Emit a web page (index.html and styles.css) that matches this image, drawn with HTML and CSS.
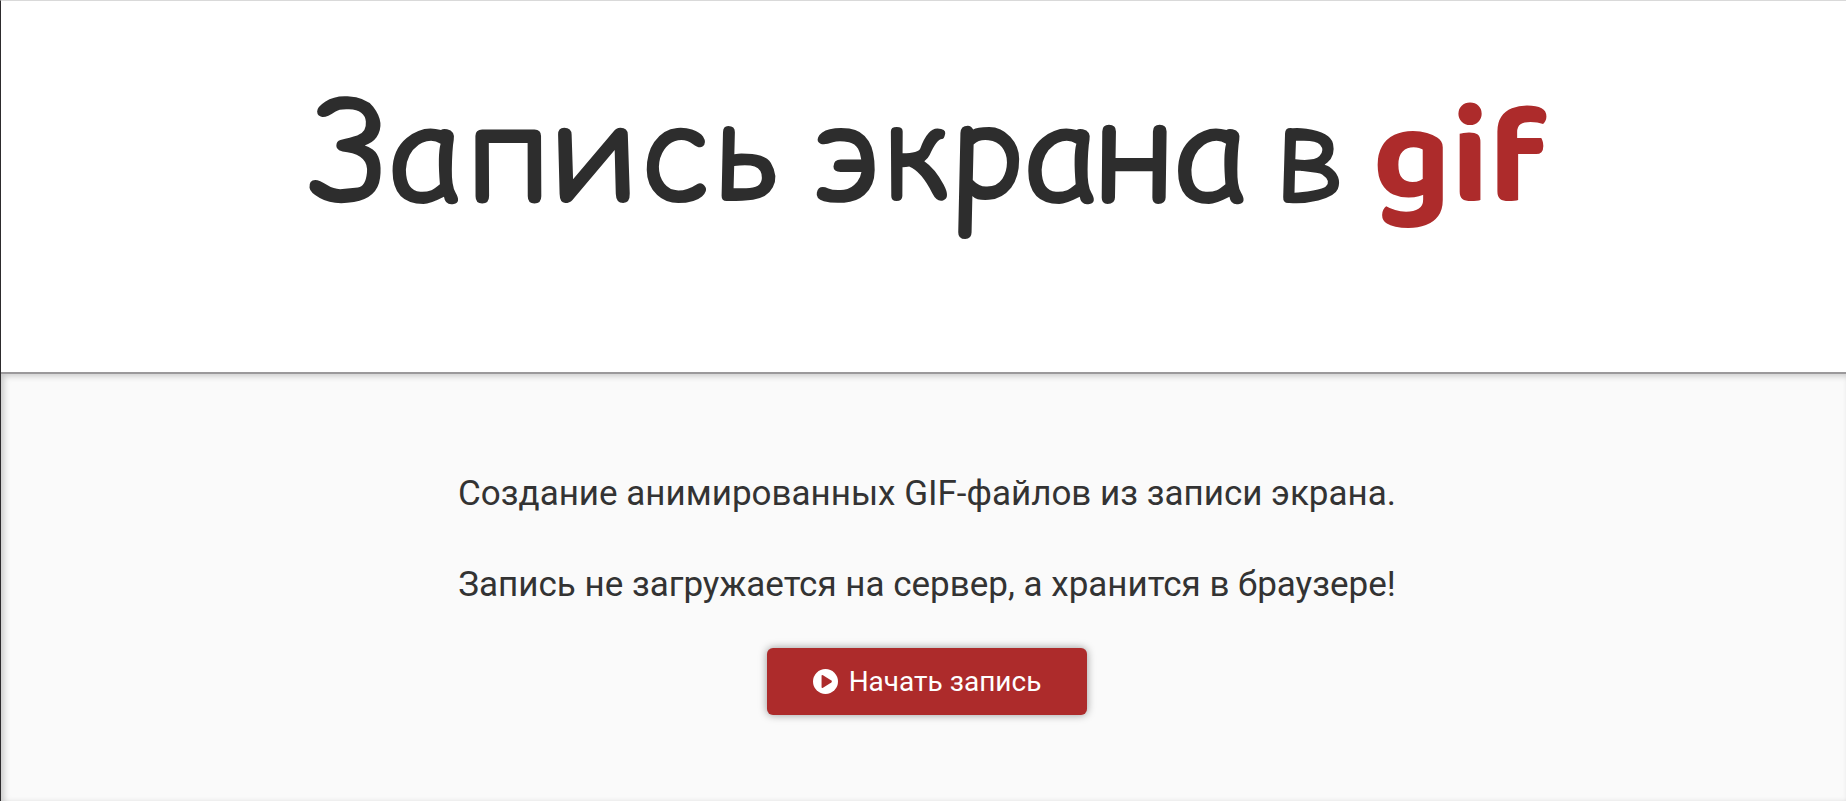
FILE: index.html
```html
<!DOCTYPE html>
<html lang="ru">

<head>
    <meta charset="UTF-8">
    <meta name="viewport" content="width=device-width, initial-scale=1.0">
    <title>Запись экрана в gif</title>
    <link rel="stylesheet" href="styles.css">
</head>

<body>
    <header class="header">
        <h1 class="title">Запись экрана в <span class="title-gif">gif</span></h1>
    </header>
    <main class="content">
        <p class="text">Создание анимированных GIF-файлов из записи экрана.</p>
        <p class="text">Запись не загружается на сервер, а хранится в браузере!</p>
        <button class="btn-record" type="button">
            <svg class="icon" viewBox="0 0 24 24" aria-hidden="true">
                <circle cx="12" cy="12" r="12" fill="#fff" />
                <path d="M8.2 6.8 Q8.2 5.2 9.6 6 L17.6 11.1 Q18.8 12 17.6 12.9 L9.6 18 Q8.2 18.8 8.2 17.2 Z" fill="#ad2b2b" />
            </svg>
            <span>Начать запись</span>
        </button>
    </main>
</body>

</html>
```
FILE: styles.css
```css
* {
    box-sizing: border-box;
}

body {
    display: flex;
    flex-direction: column;
    min-height: 100vh;
    margin: 0;
    border-top: 1px solid #d9d9d9;
    border-left: 1px solid #2d2b2d;
    background-color: #fff;
    color: #2d2d2d;
    font-family: Roboto, sans-serif;
}

.header {
    padding: 60px 20px 111px 26px;
    border-bottom: 2px solid #9b999b;
    text-align: center;
}

.title {
    margin: 0;
    font-family: "Baloo 2", "Comic Sans MS", "Comic Relief", "Balsamiq Sans", Roboto, sans-serif;
    font-size: 140px;
    font-weight: 500;
    line-height: 200px;
}

.title-gif {
    color: #ad2b2b;
    font-weight: 700;
}

.content {
    display: flex;
    flex: 1;
    flex-direction: column;
    align-items: center;
    padding: 92px 20px 80px 27px;
    background-color: #fafafa;
    box-shadow: inset 3px 2px 6px rgba(0, 0, 0, 0.2);
}

.text {
    margin: 0 0 35px;
    color: #333;
    font-size: 35px;
    line-height: 56px;
    text-align: center;
}

.btn-record {
    display: flex;
    align-items: center;
    justify-content: center;
    gap: 11px;
    padding: 17px 46px;
    border: none;
    border-radius: 6px;
    background-color: #ad2b2b;
    box-shadow: 0 0 8px rgba(0, 0, 0, 0.4);
    color: #fff;
    font-family: inherit;
    font-size: 28px;
    line-height: 33px;
    cursor: pointer;
}

.btn-record:hover {
    opacity: 0.9;
}

.icon {
    width: 25px;
    height: 25px;
}
```
